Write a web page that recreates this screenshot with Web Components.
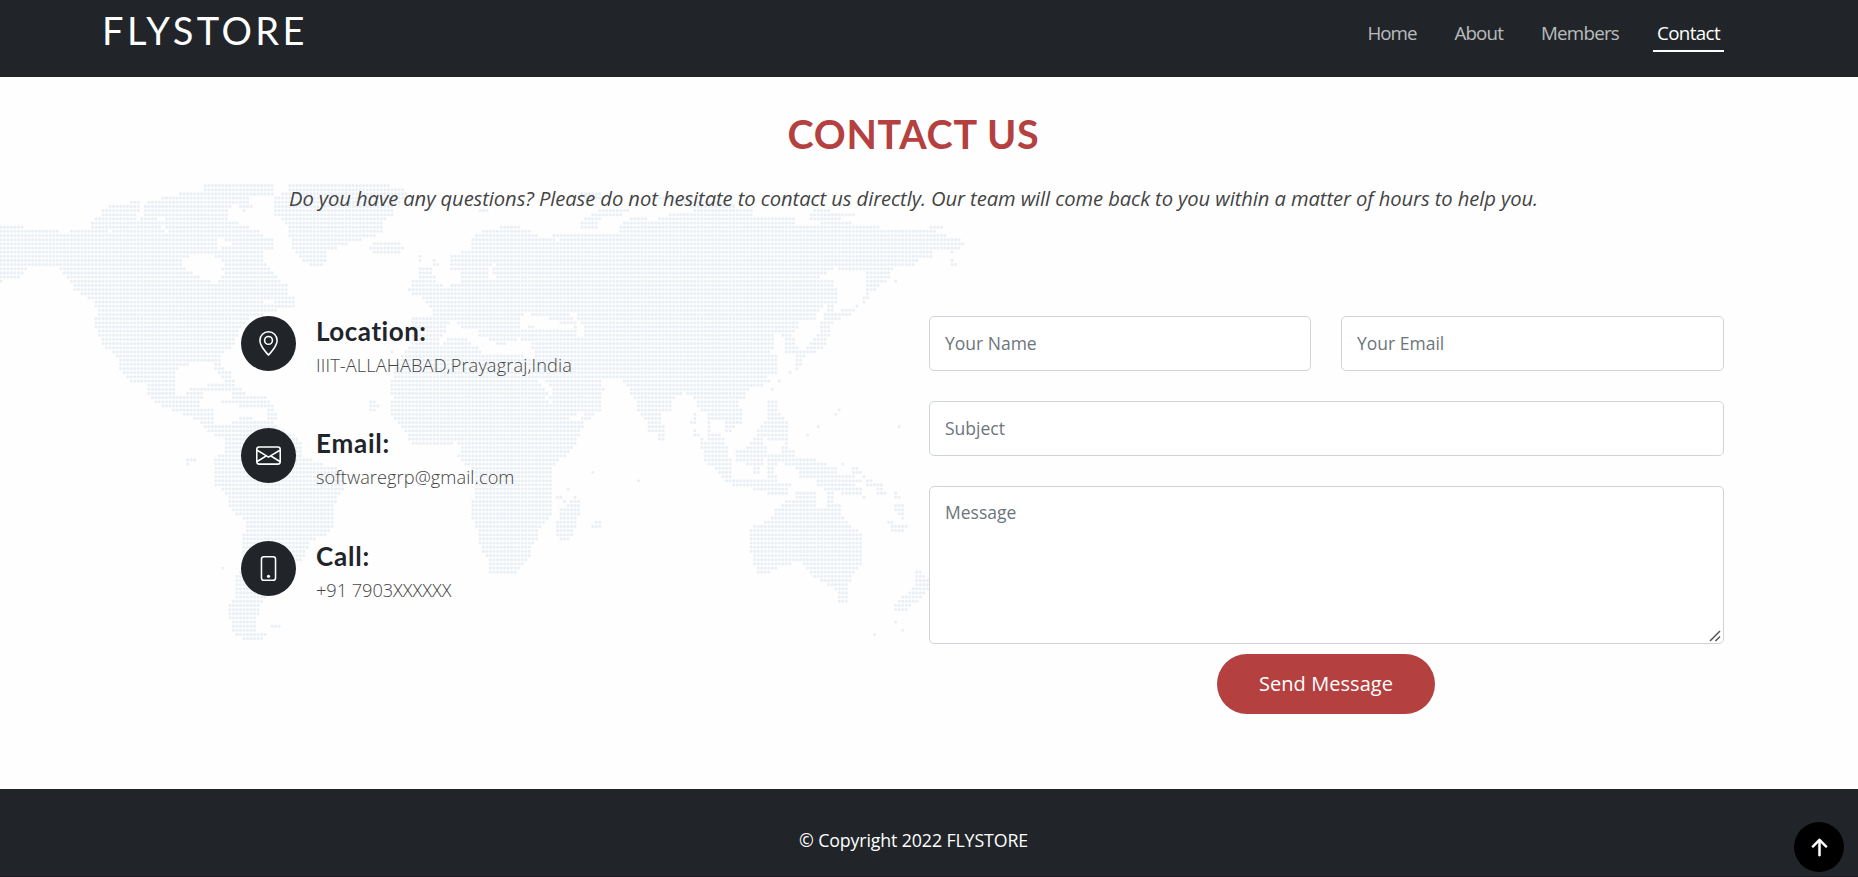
<!DOCTYPE html>
<html lang="en">
<head>
<meta charset="utf-8">
<title>FLYSTORE - Contact</title>
<style>
html,body{margin:0;padding:0}
body{font-family:"Open Sans","Liberation Sans",sans-serif;color:#444;background:#fefefe;height:877px;overflow:hidden}
</style>
</head>
<body>
<contact-page></contact-page>
<script>
const define=(name,html,ready)=>customElements.define(name,class extends HTMLElement{
  connectedCallback(){
    if(this.shadowRoot)return;
    const t=document.createElement('template');t.innerHTML=html;
    this.attachShadow({mode:'open'}).appendChild(t.content.cloneNode(true));
    if(ready)ready(this,this.shadowRoot);
  }
});

/* Text whose tracking is set so that the line takes a given width */
define('fit-text',`<style>:host{display:inline-block;white-space:nowrap}</style><span><slot></slot></span>`,(el,root)=>{
  const s=root.querySelector('span'),n=el.textContent.length;
  const w=s.getBoundingClientRect().width;
  s.style.letterSpacing=((+el.getAttribute('width')-w)/n)+'px';
});

define('site-header',`<style>
:host{display:block;background:#212529;height:77px}
.in{display:flex;justify-content:space-between;align-items:flex-start;padding:0 134px 0 102px;height:77px;box-sizing:border-box}
.logo{font:400 38px/45px Lato,sans-serif;color:#fff;padding-top:8px}
nav{display:flex;gap:30px;padding-top:16px}
</style><div class="in"><div class="logo"><fit-text width="206">FLYSTORE</fit-text></div>
<nav><nav-link width="49">Home</nav-link><nav-link width="48.5">About</nav-link><nav-link width="78">Members</nav-link><nav-link width="63" active>Contact</nav-link></nav></div>`);

define('nav-link',`<style>
:host{display:block;font-size:18.75px;line-height:34px;color:rgba(255,255,255,.7);padding:0 4px;border-bottom:2px solid transparent}
:host([active]){color:#fff;border-color:#fff}
</style><fit-text></fit-text>`,(el,root)=>{
  const f=document.createElement('fit-text');f.setAttribute('width',el.getAttribute('width'));f.textContent=el.textContent;
  root.querySelector('fit-text').replaceWith(f);
});

define('info-item',`<style>
:host{display:flex;gap:20px;height:55px}
.ic{width:55px;height:55px;border-radius:50%;background:#212529;color:#fff;display:grid;place-items:center;flex:none}
.t{display:flex;flex-direction:column}
.h{font:700 26px/33px Lato,sans-serif;color:#212529;margin-top:-1px}
.p{font-size:18.2px;line-height:27px;font-weight:350;margin-top:4px}
::slotted(svg){width:25px;height:25px;display:block}
</style><div class="ic"><slot name="icon"></slot></div><div class="t"><div class="h"><slot name="head"></slot></div><div class="p"><slot></slot></div></div>`);

define('contact-form',`<style>
:host{display:grid;grid-template-columns:382px 383px;column-gap:30px;row-gap:30px;width:795px}
input,textarea{box-sizing:border-box;width:100%;height:55px;border:1px solid #ced4da;border-radius:5px;background:#fff;padding:0 15px 2px;font:400 17.5px/26px "Open Sans",sans-serif;color:#212529;display:block;outline:0}
input::placeholder,textarea::placeholder{color:#6c757d;opacity:1}
textarea{height:158px;padding-top:12px}
textarea::-webkit-resizer{background:url("data:image/svg+xml,%3Csvg xmlns='http://www.w3.org/2000/svg' width='15' height='15'%3E%3Cpath d='M2 13L12 3M7.500 13L12 8.500' stroke='%23555' stroke-width='1.500'/%3E%3C/svg%3E") no-repeat}
.w{grid-column:1/3}
.b{grid-column:1/3;margin-top:-20px;margin-right:1px;display:flex;justify-content:center}
button{border:0;border-radius:30px;background:#b44040;color:#fff;width:218px;height:60px;font:400 20px/30px "Open Sans",sans-serif;padding:0}
</style><input placeholder="Your Name"><input placeholder="Your Email"><input class="w" placeholder="Subject"><textarea class="w" placeholder="Message"></textarea><div class="b"><button><fit-text width="134">Send Message</fit-text></button></div>`);

/* Dotted world map. Outlines are traced in thirds of a pixel, each list with its own origin. */
const A=[0,510],C=[1500,510],D=[0,1200],E=[1500,1200],F=[660,900];
const land=[
[A,'0,166 68,166 72,178 175,178 180,190 205,190 212,177 270,177 273,152 290,140 305,138 305,116 328,116 330,102 388,102 390,90 418,90 418,108 440,108 440,90 480,90 486,78 535,78 538,66 608,66 610,40 822,40 822,70 735,85 745,100 765,116 725,123 715,104 700,104 680,125 678,145 715,158 770,180 800,200 820,210 820,235 790,238 790,272 830,325 862,342 862,376 886,376 886,414 835,414 820,430 760,435 720,480 700,525 660,555 660,590 690,605 705,637 670,635 650,605 640,578 590,576 540,590 520,620 525,672 560,675 568,650 612,648 600,700 600,725 548,725 490,715 445,680 440,645 390,635 365,610 355,575 345,550 315,535 300,510 290,485 283,450 290,430 283,392 260,386 250,375 220,362 220,345 195,310 165,290 80,290 60,325 15,327 0,340'],
[A,'568,650 615,650 625,640 700,640 745,672 800,676 820,712 720,712 700,700 660,700 660,688 700,685 690,664 570,664'],
[A,'863,40 1150,40 1225,62 1225,80 1180,110 1178,142 1145,150 1147,185 1120,200 1045,220 985,240 975,280 960,290 940,290 905,275 880,245 868,200 858,170 845,150 820,130 820,80 860,60'],
[A,'1115,216 1202,216 1214,234 1200,250 1125,250 1105,234'],
[A,'1255,254 1267,254 1267,276 1255,276'],[A,'1298,264 1320,284 1320,292 1298,292'],
[A,'1255,290 1288,290 1310,320 1300,336 1335,348 1385,333 1385,305 1350,300 1350,252 1375,252 1385,240 1405,240 1410,225 1425,192 1455,178 1505,178 1505,725 1185,725 1185,682 1172,675 1172,640 1195,610 1210,570 1235,535 1235,440 1297,440 1295,410 1265,392 1262,372 1235,378 1222,360 1235,330 1255,325'],
[F,'575,130 520,200 512,250 520,290 512,310 512,350 545,385 575,432 690,434 705,422 722,450 712,470 730,488 750,500 767,540 765,590 755,600 755,660 775,700 780,740 805,780 808,820 890,818 932,760 950,690 990,650 1000,610 1000,560 1000,500 1060,440 1090,370 1140,330 1140,50 640,50'],
[C,'0,166 60,166 65,178 92,180 95,192 145,200 170,191 262,191 358,190 358,165 380,150 400,141 470,150 480,140 515,128 580,128 580,116 757,116 762,138 830,146 880,143 885,158 960,162 955,148 930,150 928,130 950,116 990,116 990,128 1064,128 1060,140 1000,142 1055,152 1060,163 1138,163 1142,178 1300,178 1330,192 1370,203 1394,220 1380,240 1300,240 1295,264 1250,270 1235,288 1180,292 1165,325 1135,347 1110,372 1095,402 1085,395 1097,360 1097,302 1010,300 970,312 960,325 1000,328 1010,370 1010,398 975,405 955,425 940,450 895,455 890,480 875,490 820,490 815,545 832,560 832,605 800,620 820,640 760,648 740,660 740,682 710,690 725,730 600,730 590,700 570,672 550,665 525,680 510,710 510,730 415,730 412,695 385,660 370,628 305,630 312,660 295,700 270,730 0,730'],
[C,'305,116 387,116 385,130 310,143 292,155 292,177 240,177 243,150 275,130'],
[C,'832,488 870,488 885,505 880,520 905,538 940,512 945,490 965,478 960,455 975,430 980,402 1000,402 1000,425 1060,413 1062,422 1040,440 1000,452 990,490 978,525 935,550 905,562 900,592 880,604 885,557 855,550 855,510'],
[C,'1290,165 1330,165 1325,178 1285,178'],[C,'1065,402 1076,402 1076,412 1065,412'],[C,'1350,240 1362,240 1362,250 1350,250'],[C,'1350,265 1362,265 1370,290 1350,290'],[C,'1181,328 1192,328 1192,338 1181,338'],[C,'865,602 876,602 876,612 865,612'],[C,'833,627 844,627 844,638 833,638'],[C,'810,650 822,650 822,662 810,662'],
[C,'240,70 305,70 300,90 250,90'],[C,'455,72 500,72 700,100 700,118 580,118 560,100 460,90'],[A,'1435,110 1466,110 1466,128 1435,128'],
[E,'0,0 292,0 270,20 240,38 272,48 272,58 235,60 248,80 230,92 215,150 185,170 160,200 150,240 157,300 157,347 115,362 112,417 92,430 90,468 50,507 0,507'],
[E,'412,0 515,0 488,28 484,60 492,90 492,122 475,120 470,98 445,95 435,60 418,40'],
[E,'590,0 705,0 727,25 727,72 705,75 695,98 678,95 670,65 640,60 642,95 670,105 685,150 692,190 700,235 820,240 872,250 860,282 805,282 795,270 755,268 745,258 695,256 665,230 640,205 620,192 605,155 600,112 625,120 625,25 590,20'],
[E,'580,35 588,35 588,70 570,70'],[E,'578,88 600,98 600,108 578,108'],
[E,'800,0 832,0 835,38 862,60 864,150 845,160 850,120 810,120 790,110 795,130 800,160 785,190 778,218 760,218 760,195 708,185 705,155 740,140 765,108 780,75 800,60'],
[E,'800,160 850,162 850,150 865,145 885,150 882,178 945,174 970,190 1010,200 1015,220 1050,222 1082,242 1055,258 1085,265 1095,292 1078,290 1030,280 970,268 950,255 940,235 895,230 885,200 835,188 820,210 840,240 805,245'],
[E,'1045,198 1072,198 1085,220 1060,220'],[E,'1088,222 1115,240 1148,250 1158,282 1135,292 1130,265 1095,252'],
[E,'750,387 762,375 790,365 815,350 825,325 848,312 858,298 885,300 886,272 948,272 948,320 980,325 980,262 1002,262 1002,310 1022,312 1022,347 1050,370 1075,395 1087,410 1087,492 1060,520 1050,548 1030,558 985,556 935,525 915,497 890,485 845,500 810,507 810,520 770,520 760,480 750,455'],
[E,'1003,558 1044,558 1038,608 1012,608'],[E,'1235,510 1265,510 1287,535 1287,555 1275,580 1225,625 1220,632 1182,632 1182,610 1245,560 1250,530'],
[E,'1182,310 1212,310 1212,355 1200,355 1182,330'],[E,'1182,274 1192,274 1202,296 1182,296'],[E,'1160,360 1212,374 1222,360 1222,370 1212,395 1172,395'],
[E,'1022,186 1032,186 1032,196 1022,196'],[E,'273,211 284,211 284,221 273,221'],[E,'410,235 420,235 420,245 410,245'],[E,'948,74 958,74 958,84 948,84'],[E,'917,99 927,99 927,109 917,109'],[E,'1001,36 1020,24 1022,34 1012,46 1001,46'],[E,'1190,74 1200,74 1200,84 1190,84'],[E,'1181,658 1192,658 1192,669 1181,669'],[E,'1202,683 1212,683 1212,694 1202,694'],[E,'1117,696 1127,696 1127,706 1117,706'],
[E,'168,285 188,285 205,310 222,286 240,296 240,330 228,370 218,405 198,432 186,420 168,405 168,370 180,350 180,325 205,320 188,300 168,296'],[E,'273,382 285,360 304,360 304,382'],[E,'198,260 208,260 208,270 198,270'],
[D,'462,0 595,0 600,22 642,25 642,70 692,75 700,62 820,62 830,78 880,110 905,125 905,165 960,188 1005,200 1032,215 1030,270 1010,290 1000,330 1000,372 980,405 930,420 915,465 900,482 860,500 830,575 780,605 775,642 765,660 770,690 802,700 790,720 730,720 700,700 690,665 683,655 685,620 705,590 705,520 720,510 727,400 738,390 735,355 705,345 685,315 678,285 642,250 640,180 672,150 675,108 640,106 610,85 590,58 550,45 540,25 485,20'],
[D,'662,0 692,0 692,10 662,10'],[D,'705,0 810,0 810,10 705,10'],[D,'800,12 818,12 830,40 828,60 800,60'],[D,'715,50 758,50 758,60 715,60'],[D,'556,174 588,174 588,184 567,186 567,198 556,198'],[D,'662,497 673,497 673,508 662,508'],[D,'812,671 842,671 842,682 812,682'],[D,'1107,0 1138,10 1120,36 1107,36'],[A,'1170,540 1180,540 1180,550 1170,550'],[A,'1107,688 1117,688 1138,702 1120,722 1107,722']
];
const water=[
[A,'545,280 555,260 590,250 620,252 655,262 672,280 665,300 672,318 655,322 655,340 640,334 605,325 580,308 555,302'],
[A,'652,200 670,200 675,212 695,222 665,230 662,240 650,238'],
[A,'418,108 435,108 430,125 420,155 410,150'],[A,'474,138 488,138 488,152 474,152'],[A,'324,178 336,178 336,190 324,190'],[A,'484,165 504,178 504,190 484,175'],
[A,'790,388 820,392 820,402 790,402'],[A,'1465,290 1490,262 1490,275 1475,300 1490,325 1465,325'],
[F,'655,130 665,105 680,85 692,62 715,68 735,105 722,80 765,80 775,110 820,120 830,136 885,130 890,115 925,125 940,150 945,180 900,165 800,165 780,150 730,112 690,105 665,140'],
[F,'895,78 915,40 950,50 975,45 1000,65 1055,72 1060,92 1010,82 950,90 940,70 905,85'],
[C,'60,450 80,425 95,440 130,445 158,456 150,468 120,455 62,464'],[C,'205,430 225,425 232,450 252,465 250,504 230,504 235,480 225,450'],
[C,'0,540 20,530 85,535 105,545 100,555 15,552 0,552'],[C,'15,510 80,520 70,528 15,528'],
[C,'112,628 122,628 140,650 125,650'],[C,'132,680 142,680 160,700 150,705'],
[C,'1000,290 1012,290 1012,302 1000,302'],[C,'165,205 178,205 178,215 165,215'],[E,'145,0 158,0 158,10 145,10'],
[E,'628,62 640,62 640,110 628,85'],[F,'955,235 970,235 1000,280 985,280'],[F,'1030,360 1075,340 1110,345 1060,362']
];
const parse=l=>l.map(([o,s])=>s.split(' ').map(p=>{const[x,y]=p.split(',').map(Number);return[(x+o[0])/3,(y+o[1])/3]}));
const hit=(ps,x,y)=>ps.some(p=>{let c=false;for(let i=0,j=p.length-1;i<p.length;j=i++){const[a,b]=p[i],[e,f]=p[j];if((b>y)!==(f>y)&&x<(e-a)*(y-b)/(f-b)+a)c=!c}return c});
define('world-map',`<style>:host{display:block;pointer-events:none}svg{display:block}</style><svg width="966" height="470" viewBox="0 180 966 470" fill="none" stroke="#e9eff4" stroke-width="3.1" stroke-linecap="round"><path/></svg>`,(el,root)=>{
  const L=parse(land),W=parse(water);let d='';
  for(let r=0;r<110;r++)for(let c=0;c<275;c++){
    const x=.61+c*3.5225,y=185.3+r*4.156;
    if(hit(L,x,y)&&!hit(W,x,y))d+=`M${(x+.3).toFixed(2)} ${(y+.3).toFixed(2)}h.01`;
  }
  root.querySelector('path').setAttribute('d',d);
});

define('site-footer',`<style>
:host{display:flex;background:#212529;height:87px;border-bottom:1px solid #1b1a22;justify-content:center;box-sizing:content-box;color:#fff;font-size:17.8px;line-height:26px}
div{padding:38px 31px 0 0}
</style><div><fit-text width="229">© Copyright 2022 FLYSTORE</fit-text></div>`);

define('back-to-top',`<style>
:host{position:fixed;right:14px;bottom:5px;width:50px;height:50px;border-radius:50%;background:#000;display:grid;place-items:center}
svg{width:35px;height:35px}
</style><svg viewBox="0 0 16 16" fill="#fff" stroke="#fff" stroke-width=".2"><path fill-rule="evenodd" d="M8 12a.5.5 0 0 0 .5-.5V5.707l2.146 2.147a.5.5 0 0 0 .708-.708l-3-3a.5.5 0 0 0-.708 0l-3 3a.5.5 0 1 0 .708.708L7.5 5.707V11.5a.5.5 0 0 0 .5.5z"/></svg>`);

define('contact-page',`<style>
:host{display:flex;flex-direction:column;height:877px}
main{height:712px;display:grid;grid-template:100% / 100%}
world-map{grid-area:1/1;padding-top:103px}
.c{grid-area:1/1;position:relative}
h2{margin:0 31px 0 0;padding-top:33px;text-align:center;font:700 39.5px/48px Lato,sans-serif;color:#b44040}
.s{margin:25px 31px 0 0;text-align:center;font-size:20.2px;line-height:30px;font-style:italic}
.cols{display:flex;justify-content:space-between;padding:103px 134px 0 241px}
.info{display:flex;flex-direction:column;gap:57.4px}
</style><site-header></site-header><main><world-map></world-map><div class="c">
<h2><fit-text width="252">CONTACT US</fit-text></h2>
<p class="s"><fit-text width="1249">Do you have any questions? Please do not hesitate to contact us directly. Our team will come back to you within a matter of hours to help you.</fit-text></p>
<div class="cols"><div class="info">
<info-item><svg slot="icon" viewBox="0 0 16 16" fill="currentColor"><path d="M12.166 8.94c-.524 1.062-1.234 2.12-1.96 3.07A31.493 31.493 0 0 1 8 14.58a31.481 31.481 0 0 1-2.206-2.57c-.726-.95-1.436-2.008-1.96-3.07C3.304 7.867 3 6.862 3 6a5 5 0 0 1 10 0c0 .862-.305 1.867-.834 2.94zM8 16s6-5.686 6-10A6 6 0 0 0 2 6c0 4.314 6 10 6 10z"/><path d="M8 8a2 2 0 1 1 0-4 2 2 0 0 1 0 4zm0 1a3 3 0 1 0 0-6 3 3 0 0 0 0 6z"/></svg><fit-text slot="head" width="111">Location:</fit-text><fit-text width="256">IIIT-ALLAHABAD,Prayagraj,India</fit-text></info-item>
<info-item><svg slot="icon" viewBox="0 0 16 16" fill="currentColor"><path d="M0 4a2 2 0 0 1 2-2h12a2 2 0 0 1 2 2v8a2 2 0 0 1-2 2H2a2 2 0 0 1-2-2V4Zm2-1a1 1 0 0 0-1 1v.217l7 4.2 7-4.2V4a1 1 0 0 0-1-1H2Zm13 2.383-4.708 2.825L15 11.105V5.383Zm-.034 6.876-5.64-3.471L8 9.583l-1.326-.795-5.64 3.47A1 1 0 0 0 2 13h12a1 1 0 0 0 .966-.741ZM1 11.105l4.708-2.897L1 5.383v5.722Z"/></svg><fit-text slot="head" width="74">Email:</fit-text><fit-text width="198.500">softwaregrp@gmail.com</fit-text></info-item>
<info-item><svg slot="icon" viewBox="0 0 16 16" fill="currentColor"><path d="M11 1a1 1 0 0 1 1 1v12a1 1 0 0 1-1 1H5a1 1 0 0 1-1-1V2a1 1 0 0 1 1-1h6zM5 0a2 2 0 0 0-2 2v12a2 2 0 0 0 2 2h6a2 2 0 0 0 2-2V2a2 2 0 0 0-2-2H5z"/><path d="M8 14a1 1 0 1 0 0-2 1 1 0 0 0 0 2z"/></svg><fit-text slot="head" width="54">Call:</fit-text><fit-text width="135.500">+91 7903XXXXXX</fit-text></info-item>
</div><contact-form></contact-form></div></div></main><site-footer></site-footer><back-to-top></back-to-top>`);
</script>
</body>
</html>
